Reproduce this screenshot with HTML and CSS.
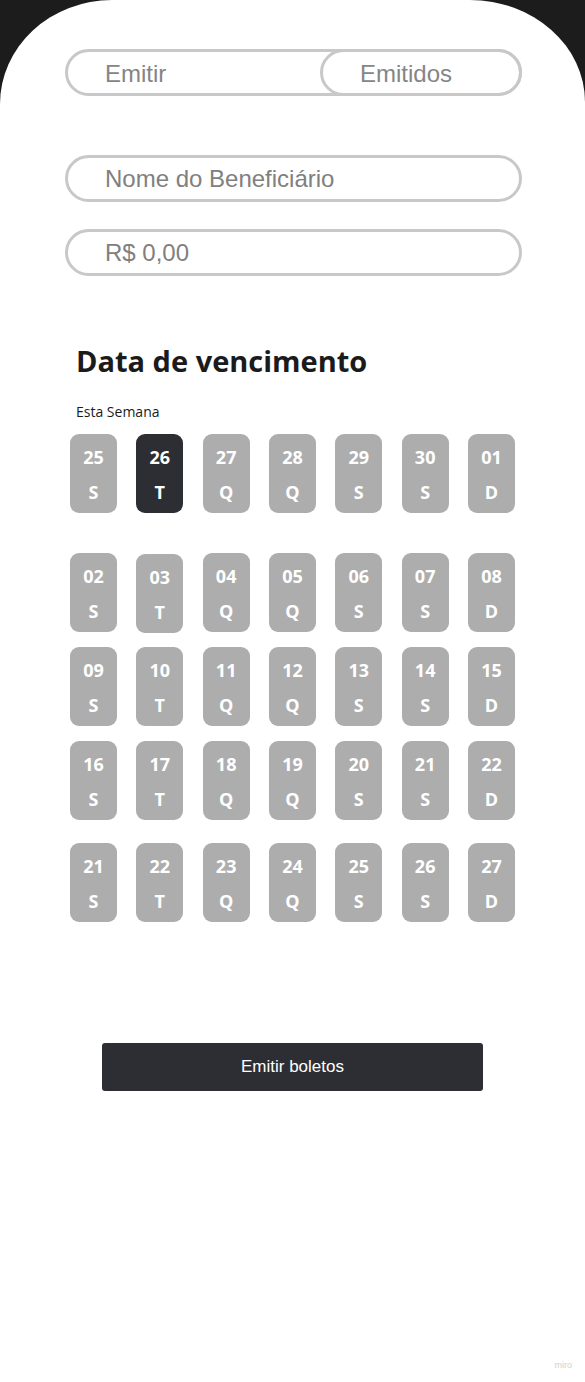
FILE: index.html
```html
<!DOCTYPE html>
<html lang="pt-BR">
<head>
<meta charset="utf-8">
<title>Emitir boletos</title>
<link rel="stylesheet" href="styles.css">
</head>
<body>
<div class="screen">
  <div class="toggle">
    <span class="toggle-left">Emitir</span>
    <span class="toggle-right">Emitidos</span>
  </div>

  <div class="field field-name">Nome do Beneficiário</div>
  <div class="field field-value">R$ 0,00</div>

  <h1 class="title">Data de vencimento</h1>
  <p class="subtitle">Esta Semana</p>

  <div class="week week-1">
    <div class="day"><span class="num">25</span><span class="wd">S</span></div>
    <div class="day day-active"><span class="num">26</span><span class="wd">T</span></div>
    <div class="day"><span class="num">27</span><span class="wd">Q</span></div>
    <div class="day"><span class="num">28</span><span class="wd">Q</span></div>
    <div class="day"><span class="num">29</span><span class="wd">S</span></div>
    <div class="day"><span class="num">30</span><span class="wd">S</span></div>
    <div class="day"><span class="num">01</span><span class="wd">D</span></div>
  </div>

  <div class="week week-2">
    <div class="day"><span class="num">02</span><span class="wd">S</span></div>
    <div class="day day-shift"><span class="num">03</span><span class="wd">T</span></div>
    <div class="day"><span class="num">04</span><span class="wd">Q</span></div>
    <div class="day"><span class="num">05</span><span class="wd">Q</span></div>
    <div class="day"><span class="num">06</span><span class="wd">S</span></div>
    <div class="day"><span class="num">07</span><span class="wd">S</span></div>
    <div class="day"><span class="num">08</span><span class="wd">D</span></div>
  </div>

  <div class="week week-3">
    <div class="day"><span class="num">09</span><span class="wd">S</span></div>
    <div class="day"><span class="num">10</span><span class="wd">T</span></div>
    <div class="day"><span class="num">11</span><span class="wd">Q</span></div>
    <div class="day"><span class="num">12</span><span class="wd">Q</span></div>
    <div class="day"><span class="num">13</span><span class="wd">S</span></div>
    <div class="day"><span class="num">14</span><span class="wd">S</span></div>
    <div class="day"><span class="num">15</span><span class="wd">D</span></div>
  </div>

  <div class="week week-4">
    <div class="day"><span class="num">16</span><span class="wd">S</span></div>
    <div class="day"><span class="num">17</span><span class="wd">T</span></div>
    <div class="day"><span class="num">18</span><span class="wd">Q</span></div>
    <div class="day"><span class="num">19</span><span class="wd">Q</span></div>
    <div class="day"><span class="num">20</span><span class="wd">S</span></div>
    <div class="day"><span class="num">21</span><span class="wd">S</span></div>
    <div class="day"><span class="num">22</span><span class="wd">D</span></div>
  </div>

  <div class="week week-5">
    <div class="day"><span class="num">21</span><span class="wd">S</span></div>
    <div class="day"><span class="num">22</span><span class="wd">T</span></div>
    <div class="day"><span class="num">23</span><span class="wd">Q</span></div>
    <div class="day"><span class="num">24</span><span class="wd">Q</span></div>
    <div class="day"><span class="num">25</span><span class="wd">S</span></div>
    <div class="day"><span class="num">26</span><span class="wd">S</span></div>
    <div class="day"><span class="num">27</span><span class="wd">D</span></div>
  </div>

  <button class="submit" type="button">Emitir boletos</button>

  <span class="watermark">miro</span>
</div>
</body>
</html>
```

FILE: styles.css
```css
* {
  box-sizing: border-box;
}

html, body {
  margin: 0;
  padding: 0;
  background: #1c1c1c;
}

.screen {
  position: relative;
  width: 585px;
  height: 1382px;
  background: #ffffff;
  border-radius: 112px 115px 0 0 / 104px 102px 0 0;
  padding: 49px 0 0 65px;
  font-family: "Liberation Sans", Arial, sans-serif;
  overflow: hidden;
}

/* toggle */
.toggle {
  display: flex;
  align-items: stretch;
  width: 457px;
  height: 47px;
  border: 3px solid #c8c8c8;
  border-radius: 24px;
}

.toggle-left {
  flex: 1;
  padding-left: 37px;
  font-size: 24px;
  line-height: 43px;
  color: #858585;
}

.toggle-right {
  width: 202px;
  margin: -3px -3px -3px 0;
  border: 3px solid #c8c8c8;
  border-radius: 24px;
  padding-left: 37px;
  font-size: 24px;
  line-height: 43px;
  color: #858585;
}

/* fields */
.field {
  width: 457px;
  height: 47px;
  border: 3px solid #c8c8c8;
  border-radius: 24px;
  padding-left: 37px;
  font-size: 24px;
  line-height: 42px;
  color: #808080;
}

.field-name {
  margin-top: 59px;
}

.field-value {
  margin-top: 27px;
}

/* headings */
.title {
  margin: 67px 0 0 11px;
  font-family: "Open Sans", sans-serif;
  font-weight: 700;
  font-size: 29px;
  line-height: 36px;
  color: #1b1b1b;
}

.subtitle {
  margin: 23px 0 0 11px;
  font-family: "Open Sans", sans-serif;
  font-size: 14px;
  line-height: 20px;
  color: #1b1b1b;
}

/* calendar */
.week {
  display: grid;
  grid-template-columns: repeat(7, 47px);
  column-gap: 19.33px;
  margin-left: 5px;
}

.week-1 { margin-top: 12px; }
.week-2 { margin-top: 40px; }
.week-3 { margin-top: 15px; }
.week-4 { margin-top: 15px; }
.week-5 { margin-top: 23px; }

.day {
  display: flex;
  flex-direction: column;
  align-items: center;
  height: 79px;
  padding-top: 12px;
  border-radius: 9px;
  background: #adadad;
  color: #ffffff;
  font-family: "Open Sans", sans-serif;
  font-weight: 700;
  font-size: 18px;
  line-height: 22px;
}

.day-active {
  background: #2d2e33;
}

.day-shift {
  transform: translateY(1px);
}

.wd {
  margin-top: 13px;
}

/* button */
.submit {
  display: block;
  width: 381px;
  height: 48px;
  margin: 121px 0 0 37px;
  border: none;
  border-radius: 3px;
  background: #2d2e33;
  color: #ffffff;
  font-family: "Liberation Sans", Arial, sans-serif;
  font-size: 17px;
  cursor: pointer;
}

.watermark {
  position: absolute;
  right: 13px;
  bottom: 12px;
  font-family: "Liberation Sans", Arial, sans-serif;
  font-size: 9px;
  color: #d0d0d0;
}
```
